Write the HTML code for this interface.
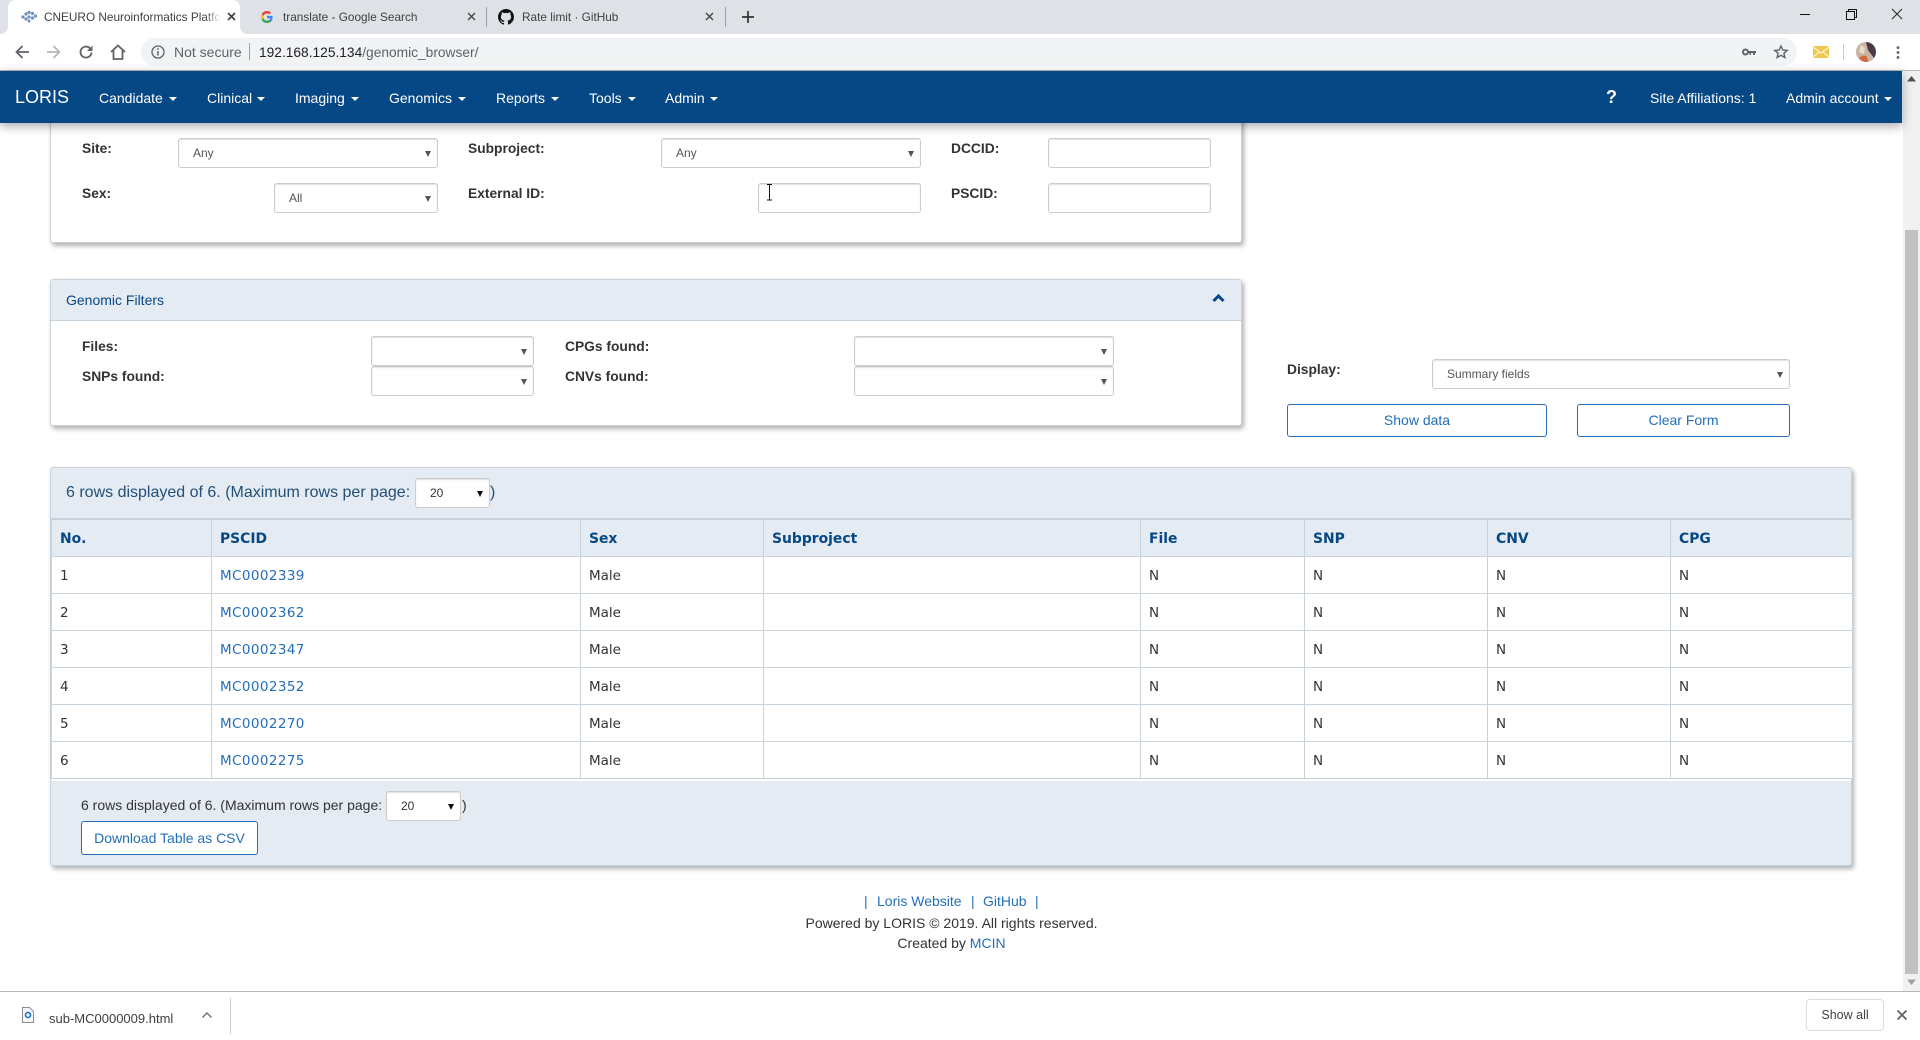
<!DOCTYPE html>
<html lang="en"><head><meta charset="utf-8"><title>CNEURO Neuroinformatics Platform</title>
<style>
html,body{margin:0;padding:0;width:1920px;height:1040px;overflow:hidden;background:#fff;font-family:"Liberation Sans",sans-serif;color:#333}
.t{position:absolute;white-space:nowrap;line-height:20px;height:20px}
.b{position:absolute;box-sizing:border-box}
svg{position:absolute;overflow:visible}
.nav{color:#fff;font-size:14px;top:88px}
.c{position:absolute;top:97px;width:0;height:0;border-left:4px solid transparent;border-right:4px solid transparent;border-top:4px solid #fff}
.lb{font-weight:bold;font-size:13.8px;color:#333}
.in{position:absolute;box-sizing:border-box;background:#fff;border:1px solid #ccc;border-radius:3px;box-shadow:inset 0 1px 1px rgba(0,0,0,.12);height:30px}
.ar{position:absolute;right:6px;top:12px;width:0;height:0;border-left:3px solid transparent;border-right:3px solid transparent;border-top:6px solid #555}
.v{font-size:12px;color:#555}
.panel{position:absolute;box-sizing:border-box;background:#fff;border:1px solid #c6d3dd;border-radius:3px;box-shadow:2px 3px 5px rgba(0,0,0,.3)}
.btn{position:absolute;box-sizing:border-box;background:#fff;border:1px solid #246eb9;border-radius:3px;color:#246eb9;font-size:14px;text-align:center}
a{color:#246eb9;text-decoration:none}
td a{letter-spacing:.4px}
table{position:absolute;left:51px;top:518px;border-collapse:collapse;table-layout:fixed;width:1801px;font-family:"DejaVu Sans",sans-serif;font-size:13.5px;color:#333;border-top:2px solid #c6d3dd;background:#fff}
th,td{box-sizing:border-box;height:37px;padding:2px 0 0 8px;border:1px solid #c6d3dd;text-align:left;font-weight:normal}
th{background:#e4ebf2;color:#064785;font-weight:bold;height:37px;font-size:13.9px}
</style></head><body>

<!-- tab strip -->
<div class="b" style="left:0;top:0;width:1920px;height:34px;background:#dee1e6"></div>
<svg style="left:0;top:0" width="260" height="34"><path d="M0 34c5 0 8-3 8-8V8c0-5 3-8 8-8h216c5 0 8 3 8 8v18c0 5 3 8 8 8z" fill="#fff"/></svg>
<svg style="left:20px;top:10px" width="18" height="14"><g fill="#6d8fc0"><circle cx="3" cy="7" r="1.6"/><circle cx="6" cy="4" r="1.6"/><circle cx="6" cy="9" r="1.6"/><circle cx="9" cy="2.5" r="1.6"/><circle cx="9" cy="7" r="1.6"/><circle cx="9" cy="11" r="1.5"/><circle cx="12.5" cy="3.5" r="1.6"/><circle cx="12.5" cy="8" r="1.6"/><circle cx="15.5" cy="6" r="1.6"/></g></svg>
<div class="t" style="left:44px;top:7px;width:176px;overflow:hidden;font-size:11.8px;color:#3c4043">CNEURO Neuroinformatics Platform</div>
<div class="b" style="left:205px;top:7px;width:16px;height:20px;background:linear-gradient(90deg,rgba(255,255,255,0),#fff)"></div>
<svg style="left:227px;top:12px" width="9" height="9"><path d="M1 1l7 7M8 1l-7 7" stroke="#444" stroke-width="1.7"/></svg>
<svg style="left:260px;top:10px" width="14" height="14"><path d="M12.6 7.2c0-.5 0-.9-.1-1.3H7v2.5h3.2c-.2.8-.6 1.4-1.2 1.8l2 1.5c1.1-1.1 1.6-2.6 1.6-4.5z" fill="#4285f4"/><path d="M7 13c1.7 0 3-.5 4-1.5l-2-1.5c-.5.4-1.2.6-2 .6-1.6 0-2.9-1-3.4-2.5l-2 1.6C2.600 11.700 4.700 13 7 13z" fill="#34a853"/><path d="M3.600 8.100C3.400 7.200 3.400 6.800 3.600 5.900l-2-1.600c-.8 1.700-.8 3.700 0 5.400z" fill="#fbbc05"/><path d="M7 3.400c.9 0 1.700.3 2.300.9l1.800-1.800C10 1.600 8.600 1 7 1 4.700 1 2.600 2.300 1.600 4.300l2 1.600C4.100 4.400 5.400 3.400 7 3.400z" fill="#ea4335"/></svg>
<div class="t" style="left:283px;top:7px;font-size:11.8px;color:#3c4043">translate - Google Search</div>
<svg style="left:467px;top:12px" width="9" height="9"><path d="M1 1l7 7M8 1l-7 7" stroke="#444" stroke-width="1.4"/></svg>
<div class="b" style="left:486px;top:7px;width:1px;height:20px;background:#9aa0a6"></div>
<svg style="left:498px;top:9px" width="16" height="16" viewBox="0 0 16 16"><path fill="#111" d="M8 0C3.580 0 0 3.580 0 8c0 3.540 2.290 6.530 5.470 7.590.4.070.55-.17.55-.38v-1.340c-2.230.48-2.700-1.070-2.700-1.070-.36-.92-.89-1.170-.89-1.170-.73-.5.060-.49.060-.49.800.060 1.230.83 1.230.83.710 1.220 1.870.87 2.330.66.070-.52.280-.87.510-1.070-1.780-.2-3.640-.89-3.640-3.950 0-.870.310-1.590.820-2.150-.080-.2-.360-1.020.080-2.120 0 0 .670-.210 2.200.820A7.700 7.700 0 0 1 8 3.870c.680 0 1.360.090 2 .270 1.530-1.040 2.200-.820 2.200-.820.440 1.100.160 1.920.080 2.120.510.560.820 1.270.820 2.150 0 3.070-1.870 3.750-3.650 3.950.290.250.540.730.540 1.480v2.190c0 .210.150.460.550.380A8.010 8.010 0 0 0 16 8c0-4.420-3.580-8-8-8z"/></svg>
<div class="t" style="left:522px;top:7px;font-size:11.8px;color:#3c4043">Rate limit · GitHub</div>
<svg style="left:705px;top:12px" width="9" height="9"><path d="M1 1l7 7M8 1l-7 7" stroke="#444" stroke-width="1.4"/></svg>
<div class="b" style="left:725px;top:7px;width:1px;height:20px;background:#9aa0a6"></div>
<svg style="left:742px;top:11px" width="12" height="12"><path d="M6 0v12M0 6h12" stroke="#333" stroke-width="1.7"/></svg>
<svg style="left:1800px;top:14px" width="10" height="2"><path d="M0 .5h10" stroke="#111"/></svg>
<svg style="left:1846px;top:9px" width="11" height="11"><path d="M.5 2.500h8v8h-8zM2.500 2.500v-2h8v8h-2" fill="none" stroke="#111"/></svg>
<svg style="left:1892px;top:9px" width="10" height="10"><path d="M0 0l10 10M10 0L0 10" stroke="#222"/></svg>

<!-- toolbar -->
<div class="b" style="left:0;top:34px;width:1920px;height:36px;background:#fff"></div>
<div class="b" style="left:0;top:70px;width:1920px;height:1px;background:#b8babc"></div>
<svg style="left:15px;top:45px" width="14" height="14"><path d="M14 7H1.500M7.500 1L1.500 7l6 6" fill="none" stroke="#5f6368" stroke-width="1.800"/></svg>
<svg style="left:47px;top:45px" width="14" height="14"><path d="M0 7h12.500M6.500 1l6 6-6 6" fill="none" stroke="#b4b7ba" stroke-width="1.800"/></svg>
<svg style="left:79px;top:45px" width="14" height="14"><path d="M12.500 7.500a5.500 5.500 0 1 1-1.600-4.300" fill="none" stroke="#5f6368" stroke-width="1.800"/><path d="M13.500.5v5.500H8z" fill="#5f6368"/></svg>
<svg style="left:110px;top:44px" width="16" height="16"><path d="M1 8l7-6.500L15 8M3.500 6.500V15h9V6.500" fill="none" stroke="#5f6368" stroke-width="1.800"/></svg>
<div class="b" style="left:141px;top:38px;width:1656px;height:28px;background:#f1f3f4;border-radius:14px"></div>
<svg style="left:151px;top:45px" width="14" height="14"><circle cx="7" cy="7" r="6" fill="none" stroke="#5f6368" stroke-width="1.300"/><path d="M7 6v4.500M7 3.300v1.500" stroke="#5f6368" stroke-width="1.500"/></svg>
<div class="t" style="left:174px;top:42px;font-size:14px;color:#5f6368">Not secure</div>
<div class="b" style="left:249px;top:43px;width:1px;height:17px;background:#9aa0a6"></div>
<div class="t" style="left:259px;top:43px;font-size:13.75px;color:#202124">192.168.125.134<span style="color:#5f6368">/genomic_browser/</span></div>
<svg style="left:1742px;top:48px" width="14" height="8"><circle cx="3.500" cy="4" r="2.500" fill="none" stroke="#5f6368" stroke-width="2"/><path d="M6 3h8v2h-1v2h-2V5H9v2H7.500V5H6z" fill="#5f6368"/></svg>
<svg style="left:1774px;top:45px" width="14" height="14"><path d="M7 1l1.800 4 4.400.4-3.300 2.900 1 4.300L7 10.300l-3.900 2.300 1-4.300L.8 5.400l4.400-.4z" fill="none" stroke="#5f6368" stroke-width="1.400"/></svg>
<svg style="left:1813px;top:46px" width="16" height="12"><rect width="16" height="12" rx="1" fill="#edc653"/><path d="M0 1l8 6 8-6M0 11l6-5M16 11l-6-5" fill="none" stroke="#fff3c4" stroke-width="1.300"/></svg>
<div class="b" style="left:1843px;top:44px;width:1px;height:16px;background:#ccc"></div>
<svg style="left:1856px;top:42px" width="20" height="20"><circle cx="10" cy="10" r="10" fill="#c9b3a2"/><path d="M10 0a10 10 0 0 1 8 16L12 8z" fill="#4a3a48"/><path d="M3 16c3-3 6-3 8-1l1 5a10 10 0 0 1-9-4z" fill="#d4663c"/><path d="M5 3l4 3-1 6-5-2z" fill="#e8dccf"/></svg>
<svg style="left:1896px;top:46px" width="4" height="13"><circle cx="2" cy="1.600" r="1.400" fill="#5f6368"/><circle cx="2" cy="6.500" r="1.400" fill="#5f6368"/><circle cx="2" cy="11.400" r="1.400" fill="#5f6368"/></svg>

<!-- scrollbar -->
<div class="b" style="left:1903px;top:71px;width:17px;height:920px;background:#f1f1f1"></div>
<div class="b" style="left:1905px;top:230px;width:13px;height:744px;background:#c1c1c1"></div>
<svg style="left:1907px;top:76px" width="9" height="6"><path d="M4.500 0L9 5.500H0z" fill="#505050"/></svg>
<svg style="left:1907px;top:979px" width="9" height="6"><path d="M4.500 6L9 .5H0z" fill="#a3a3a3"/></svg>

<!-- panel 1 -->
<div class="panel" style="left:50px;top:100px;width:1192px;height:143px"></div>
<div class="t lb" style="left:82px;top:139px">Site:</div>
<div class="in" style="left:178px;top:138px;width:260px"><div class="ar"></div></div>
<div class="t v" style="left:193px;top:143px">Any</div>
<div class="t lb" style="left:468px;top:139px">Subproject:</div>
<div class="in" style="left:661px;top:138px;width:260px"><div class="ar"></div></div>
<div class="t v" style="left:676px;top:143px">Any</div>
<div class="t lb" style="left:951px;top:139px">DCCID:</div>
<div class="in" style="left:1048px;top:138px;width:163px"></div>
<div class="t lb" style="left:82px;top:184px">Sex:</div>
<div class="in" style="left:274px;top:183px;width:164px"><div class="ar"></div></div>
<div class="t v" style="left:289px;top:188px">All</div>
<div class="t lb" style="left:468px;top:184px">External ID:</div>
<div class="in" style="left:758px;top:183px;width:163px"></div>
<svg style="left:766px;top:184px" width="7" height="17"><path d="M1 .5h5M3.500 .5v15.500M1 16h5" fill="none" stroke="#111"/></svg>
<div class="t lb" style="left:951px;top:184px">PSCID:</div>
<div class="in" style="left:1048px;top:183px;width:163px"></div>

<!-- panel 2 -->
<div class="panel" style="left:50px;top:279px;width:1192px;height:147px">
  <div class="b" style="left:0;top:0;width:1190px;height:41px;background:#e4ebf2;border-bottom:1px solid #c6d3dd"></div>
</div>
<div class="t" style="left:66px;top:290px;font-size:14px;color:#064785">Genomic Filters</div>
<svg style="left:1212px;top:293px" width="13" height="10"><path d="M1.500 8l5-5 5 5" fill="none" stroke="#064785" stroke-width="3"/></svg>
<div class="t lb" style="left:82px;top:337px">Files:</div>
<div class="in" style="left:371px;top:336px;width:163px"><div class="ar"></div></div>
<div class="t lb" style="left:565px;top:337px">CPGs found:</div>
<div class="in" style="left:854px;top:336px;width:260px"><div class="ar"></div></div>
<div class="t lb" style="left:82px;top:367px">SNPs found:</div>
<div class="in" style="left:371px;top:366px;width:163px"><div class="ar"></div></div>
<div class="t lb" style="left:565px;top:367px">CNVs found:</div>
<div class="in" style="left:854px;top:366px;width:260px"><div class="ar"></div></div>

<!-- display -->
<div class="t lb" style="left:1287px;top:360px">Display:</div>
<div class="in" style="left:1432px;top:359px;width:358px"><div class="ar"></div></div>
<div class="t v" style="left:1447px;top:364px">Summary fields</div>
<div class="btn" style="left:1287px;top:404px;width:260px;height:33px;line-height:31px">Show data</div>
<div class="btn" style="left:1577px;top:404px;width:213px;height:33px;line-height:31px">Clear Form</div>

<!-- results panel -->
<div class="panel" style="left:50px;top:467px;width:1802px;height:399px;background:#e4ebf2"></div>
<div class="t" style="left:66px;top:483px;font-size:16px;color:#234f78">6 rows displayed of 6. (Maximum rows per page:</div>
<div class="in" style="left:415px;top:478px;width:75px"><div class="ar" style="border-top-color:#111"></div></div>
<div class="t" style="left:430px;top:483px;font-size:12px;color:#333">20</div>
<div class="t" style="left:490px;top:483px;font-size:16px;color:#234f78">)</div>

<table>
<colgroup><col style="width:160px"><col style="width:369px"><col style="width:183px"><col style="width:377px"><col style="width:164px"><col style="width:183px"><col style="width:183px"><col style="width:182px"></colgroup>
<tr><th>No.</th><th>PSCID</th><th>Sex</th><th>Subproject</th><th>File</th><th>SNP</th><th>CNV</th><th>CPG</th></tr>
<tr><td>1</td><td><a href="#">MC0002339</a></td><td>Male</td><td></td><td>N</td><td>N</td><td>N</td><td>N</td></tr>
<tr><td>2</td><td><a href="#">MC0002362</a></td><td>Male</td><td></td><td>N</td><td>N</td><td>N</td><td>N</td></tr>
<tr><td>3</td><td><a href="#">MC0002347</a></td><td>Male</td><td></td><td>N</td><td>N</td><td>N</td><td>N</td></tr>
<tr><td>4</td><td><a href="#">MC0002352</a></td><td>Male</td><td></td><td>N</td><td>N</td><td>N</td><td>N</td></tr>
<tr><td>5</td><td><a href="#">MC0002270</a></td><td>Male</td><td></td><td>N</td><td>N</td><td>N</td><td>N</td></tr>
<tr><td>6</td><td><a href="#">MC0002275</a></td><td>Male</td><td></td><td>N</td><td>N</td><td>N</td><td>N</td></tr>
</table>
<div class="b" style="left:51px;top:779px;width:1800px;height:2px;background:#fff"></div>

<div class="t" style="left:81px;top:795px;font-size:14px;color:#333">6 rows displayed of 6. (Maximum rows per page:</div>
<div class="in" style="left:386px;top:791px;width:75px"><div class="ar" style="border-top-color:#111"></div></div>
<div class="t" style="left:401px;top:796px;font-size:12px;color:#333">20</div>
<div class="t" style="left:462px;top:795px;font-size:14px;color:#333">)</div>
<div class="btn" style="left:81px;top:821px;width:177px;height:34px;line-height:32px">Download Table as CSV</div>

<!-- footer -->
<div class="t" style="left:864px;top:891px;font-size:14px;color:#246eb9">|</div>
<div class="t" style="left:877px;top:891px;font-size:14px"><a href="#">Loris Website</a></div>
<div class="t" style="left:971px;top:891px;font-size:14px;color:#246eb9">|</div>
<div class="t" style="left:983px;top:891px;font-size:14px"><a href="#">GitHub</a></div>
<div class="t" style="left:1035px;top:891px;font-size:14px;color:#246eb9">|</div>
<div class="t" style="left:0;width:1903px;text-align:center;top:913px;font-size:14px;color:#333">Powered by LORIS © 2019. All rights reserved.</div>
<div class="t" style="left:0;width:1903px;text-align:center;top:933px;font-size:14px;color:#333">Created by <a href="#">MCIN</a></div>

<!-- navbar -->
<div class="b" style="left:0;top:71px;width:1902px;height:52px;background:#064785;box-shadow:0 3px 10px rgba(0,0,0,.35)"></div>
<div class="t" style="left:15px;top:87px;font-size:18px;color:#fff">LORIS</div>
<div class="t nav" style="left:99px">Candidate</div><div class="c" style="left:169px"></div>
<div class="t nav" style="left:207px">Clinical</div><div class="c" style="left:257px"></div>
<div class="t nav" style="left:295px">Imaging</div><div class="c" style="left:351px"></div>
<div class="t nav" style="left:389px">Genomics</div><div class="c" style="left:458px"></div>
<div class="t nav" style="left:496px">Reports</div><div class="c" style="left:551px"></div>
<div class="t nav" style="left:589px">Tools</div><div class="c" style="left:628px"></div>
<div class="t nav" style="left:665px">Admin</div><div class="c" style="left:710px"></div>
<div class="t" style="left:1606px;top:87px;font-size:18px;font-weight:bold;color:#fff">?</div>
<div class="t nav" style="left:1650px">Site Affiliations: 1</div>
<div class="t nav" style="left:1786px">Admin account</div><div class="c" style="left:1884px"></div>

<!-- download bar -->
<div class="b" style="left:0;top:991px;width:1920px;height:49px;background:#fff;border-top:1px solid #b4b6b8"></div>
<svg style="left:22px;top:1007px" width="12" height="16"><path d="M.5.5h7l4 4v11H.5z" fill="#f4f6f9" stroke="#8a8f96"/><circle cx="6" cy="8" r="2.500" fill="none" stroke="#1a66c0" stroke-width="1.500"/></svg>
<div class="t" style="left:49px;top:1009px;font-size:13px;color:#3c4043">sub-MC0000009.html</div>
<svg style="left:202px;top:1012px" width="10" height="6"><path d="M.5 5.500L5 1l4.500 4.500" fill="none" stroke="#6b6f74" stroke-width="1.400"/></svg>
<div class="b" style="left:230px;top:998px;width:1px;height:36px;background:#ccc"></div>
<div class="b" style="left:1806px;top:999px;width:78px;height:32px;border:1px solid #dadce0;border-radius:4px;background:#fff;font-size:12.500px;line-height:30px;text-align:center;color:#3c4043">Show all</div>
<svg style="left:1897px;top:1010px" width="10" height="10"><path d="M.5.5l9 9M9.500.5l-9 9" stroke="#5f6368" stroke-width="1.800"/></svg>
</body></html>
